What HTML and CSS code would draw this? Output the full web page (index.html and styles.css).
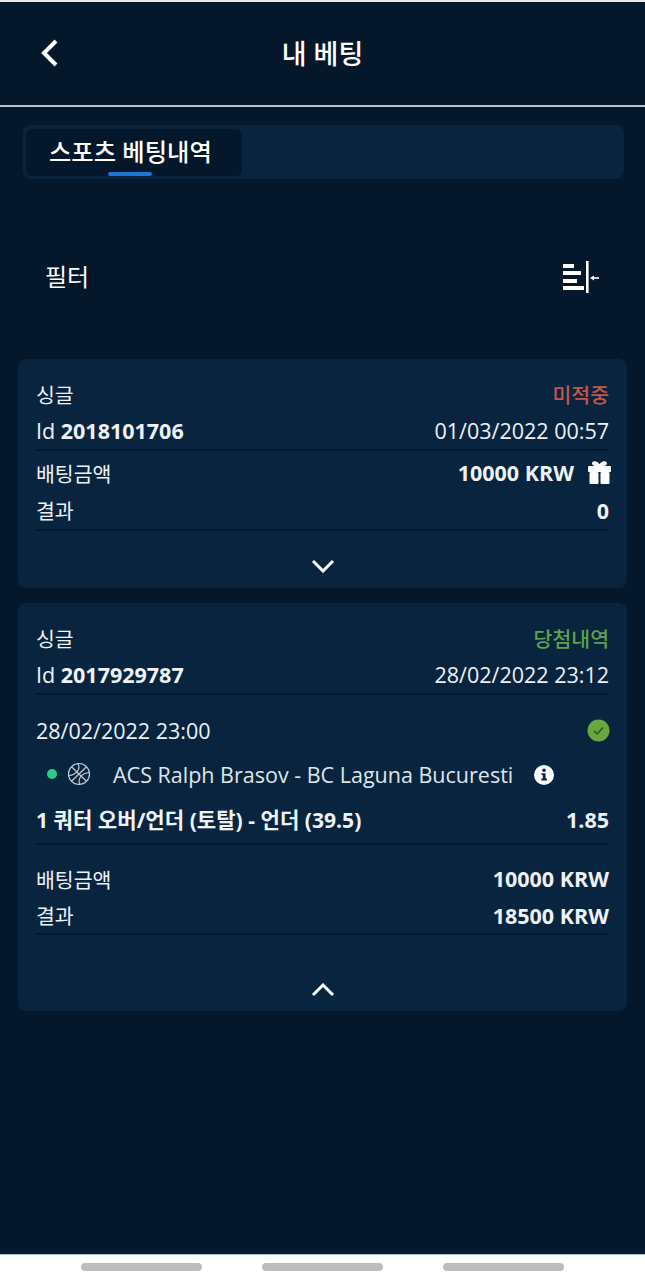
FILE: index.html
```html
<!DOCTYPE html>
<html lang="ko">
<head>
    <meta charset="UTF-8">
    <meta name="viewport" content="width=device-width, initial-scale=1.0">
    <title>내 베팅</title>
    <link rel="stylesheet" href="styles.css">
</head>
<body>
    <div id="app">
        <header class="topbar">
            <svg class="back-icon" width="20" height="30" viewBox="0 0 20 30"><path d="M16 3 L4 15 L16 27" fill="none" stroke="#fff" stroke-width="4"/></svg>
            <h1>내 베팅</h1>
        </header>

        <nav class="tabs">
            <div class="tab active">스포츠 베팅내역</div>
        </nav>

        <div class="filter-row">
            <span class="filter-label">필터</span>
            <svg width="38" height="38" viewBox="0 0 38 38">
                <g fill="#fff">
                    <rect x="2" y="5" width="11" height="4"/>
                    <rect x="2" y="12" width="18" height="4"/>
                    <rect x="2" y="20" width="14" height="4"/>
                    <rect x="2" y="27" width="21" height="4"/>
                    <rect x="25" y="2" width="2.6" height="32"/>
                    <rect x="32" y="18.2" width="6" height="1.6"/>
                    <path d="M29 19 L33 16.5 V21.5 Z"/>
                </g>
            </svg>
        </div>

        <section class="card">
            <div class="row row-head"><span class="ko">싱글</span><span class="ko status lost">미적중</span></div>
            <div class="row line id-row"><span>Id <b>2018101706</b></span><span>01/03/2022 00:57</span></div>
            <div class="row stake-first">
                <span class="ko">배팅금액</span>
                <span class="with-icon"><b>10000 KRW</b>
                    <svg width="23" height="23" viewBox="0 0 23 23">
                        <g fill="#fff">
                            <rect x="0" y="5" width="23" height="6" rx="1"/>
                            <rect x="1.5" y="11" width="9" height="12" rx="1"/>
                            <rect x="12.5" y="11" width="9" height="12" rx="1"/>
                        </g>
                        <path d="M11.5 5 C8 4.5 5.2 4 5.2 2.6 C5.2 .6 9 .8 11.5 5 C14 .8 17.8 .6 17.8 2.6 C17.8 4 15 4.5 11.5 5 Z" fill="none" stroke="#fff" stroke-width="2.4"/>
                    </svg>
                </span>
            </div>
            <div class="row line result-first"><span class="ko">결과</span><b>0</b></div>
            <div class="toggle toggle-down">
                <svg width="24" height="14" viewBox="0 0 24 14"><path d="M2 2 L12 12 L22 2" fill="none" stroke="#fff" stroke-width="3"/></svg>
            </div>
        </section>

        <section class="card">
            <div class="row row-head"><span class="ko">싱글</span><span class="ko status won">당첨내역</span></div>
            <div class="row line id-row"><span>Id <b>2017929787</b></span><span>28/02/2022 23:12</span></div>
            <div class="event">
                <div class="event-date">
                    <span>28/02/2022 23:00</span>
                    <svg width="23" height="23" viewBox="0 0 23 23"><circle cx="11.5" cy="11.5" r="11" fill="#68a83f"/><path d="M7 12 L10.2 15 L16 8.5" fill="none" stroke="#1f5a2c" stroke-width="1.5"/></svg>
                </div>
                <div class="event-game">
                    <i class="live-dot"></i>
                    <svg class="ball" width="24" height="24" viewBox="0 0 24 24">
                        <g fill="none" stroke="#c3ccd6" stroke-width="1.2">
                            <circle cx="12" cy="12" r="10.5"/>
                            <path d="M4.5 4.7 L19.5 19.3"/>
                            <path d="M19.5 4.7 L4.5 19.3"/>
                            <path d="M11 1.6 C14 7 9 13 1.8 13.5"/>
                            <path d="M22.2 10.5 C15 11 10 17 13 22.4"/>
                        </g>
                    </svg>
                    <span class="teams">ACS Ralph Brasov - BC Laguna Bucuresti</span>
                    <svg class="info" width="20" height="20" viewBox="0 0 20 20">
                        <circle cx="10" cy="10" r="10" fill="#fff"/>
                        <g fill="#09243f">
                            <circle cx="10" cy="5.2" r="1.8"/>
                            <path d="M7.5 8.2 H11.6 V13.6 H13 V15.4 H7.3 V13.6 H8.8 V10 H7.5 Z"/>
                        </g>
                    </svg>
                </div>
                <div class="row line market"><b class="market-name">1 쿼터 오버/언더 (토탈) - 언더 (39.5)</b><b>1.85</b></div>
            </div>
            <div class="row stake-second"><span class="ko">배팅금액</span><b>10000 KRW</b></div>
            <div class="row line"><span class="ko">결과</span><b>18500 KRW</b></div>
            <div class="toggle toggle-up">
                <svg width="24" height="14" viewBox="0 0 24 14"><path d="M2 12 L12 2 L22 12" fill="none" stroke="#fff" stroke-width="3"/></svg>
            </div>
        </section>

        <div class="spacer"></div>

        <footer class="softkeys">
            <i></i><i></i><i></i>
        </footer>
    </div>
</body>
</html>
```

FILE: styles.css
```css
* {
    margin: 0;
    padding: 0;
    box-sizing: border-box;
}

body {
    font-family: "Open Sans", "Noto Sans CJK KR", sans-serif;
    background: #fff;
    color: #eef2f5;
    font-size: 21.5px;
}

b {
    font-weight: 700;
}

.ko {
    font-size: 20.5px;
}

#app {
    width: 645px;
    height: 1280px;
    display: flex;
    flex-direction: column;
    background: #05172a;
    border-top: 2px solid #e4e8ec;
    overflow: hidden;
}

.topbar {
    height: 105px;
    flex: none;
    display: flex;
    align-items: center;
    justify-content: center;
    position: relative;
    border-bottom: 2px solid #bcc1c6;
}

.topbar h1 {
    font-size: 27px;
    font-weight: 500;
    color: #fff;
    margin-top: -2px;
}

.back-icon {
    position: absolute;
    left: 40px;
    top: 36px;
}

.tabs {
    margin: 18px 21px 0 23px;
    height: 54px;
    flex: none;
    padding: 4px 3px 3px;
    background: #09243f;
    border-radius: 8px;
}

.tab {
    width: 216px;
    height: 47px;
    padding-left: 23px;
    background: #05172a;
    border-radius: 6px;
    font-size: 24.3px;
    font-weight: 500;
    color: #fff;
    line-height: 45px;
    white-space: nowrap;
    position: relative;
}

.tab.active::after {
    content: '';
    position: absolute;
    left: 82px;
    bottom: 0;
    width: 44px;
    height: 4px;
    border-radius: 2px;
    background: #1a76d2;
}

.filter-row {
    flex: none;
    height: 180px;
    padding: 18px 46px 0 45px;
    display: flex;
    align-items: center;
    justify-content: space-between;
    font-size: 24px;
    color: #fff;
}

.filter-label {
    margin-bottom: 5px;
}

.card {
    flex: none;
    margin: 0 18px 15px;
    padding: 16px 18px 0 18px;
    background: #09243f;
    border-radius: 8px;
}

.row {
    height: 37px;
    display: flex;
    align-items: center;
    justify-content: space-between;
    white-space: nowrap;
}

.row.row-head {
    height: 38px;
}

.row.line {
    height: 38px;
    border-bottom: 2px solid #05172a;
}

.row.id-row {
    padding-bottom: 2px;
}

.status {
    font-weight: 500;
}

.status.lost {
    color: #c4574b;
}

.status.won {
    color: #5fa04e;
}

.stake-first {
    margin-top: 3px;
}

.row.result-first {
    height: 40px;
}

.stake-second {
    margin-top: 15px;
}

.with-icon {
    display: flex;
    align-items: center;
    gap: 14px;
    margin-right: -2px;
}

.toggle {
    display: flex;
    justify-content: center;
}

.toggle-down {
    height: 57px;
    padding-top: 28px;
}

.toggle-up {
    height: 76px;
    padding-top: 48px;
}

.event {
    padding-top: 17px;
}

.event-date {
    height: 37px;
    display: flex;
    align-items: center;
    justify-content: space-between;
}

.event-date svg {
    margin-right: -1px;
}

.event-game {
    height: 44px;
    margin-top: 3px;
    display: flex;
    align-items: center;
    color: #dfe6ec;
    white-space: nowrap;
}

.live-dot {
    width: 10px;
    height: 10px;
    margin-left: 11px;
    border-radius: 50%;
    background: #2bcb8a;
}

.ball {
    margin-left: 10px;
}

.teams {
    margin-left: 22px;
}

.info {
    margin-left: 21px;
    margin-top: 2px;
}

.row.market {
    height: 48px;
    margin-top: 1px;
    padding-bottom: 2px;
}

.market-name {
    font-size: 21.1px;
}

.spacer {
    flex: 1;
}

.softkeys {
    flex: none;
    height: 26px;
    background: #fff;
    border-top: 1px solid #b8c4cc;
    display: flex;
    justify-content: center;
    gap: 60px;
    padding-top: 8px;
}

.softkeys i {
    width: 121px;
    height: 8px;
    border-radius: 4px;
    background: #bdbdbd;
}
```
